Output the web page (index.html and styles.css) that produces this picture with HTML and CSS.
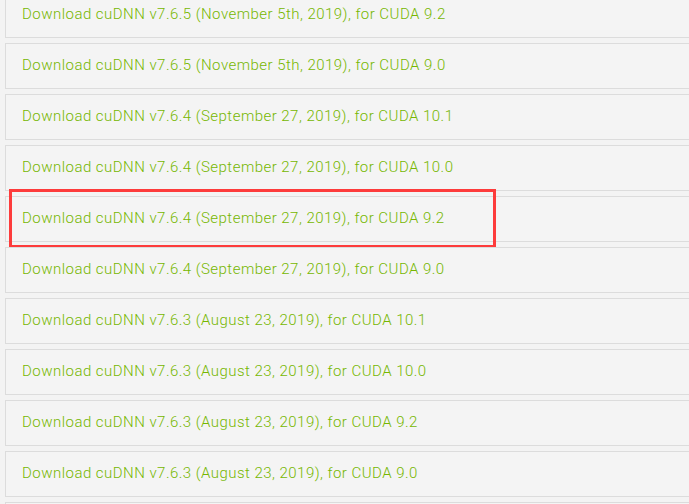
FILE: index.html
```html
<!DOCTYPE html>
<html>
<head>
<meta charset="utf-8">
<link rel="stylesheet" href="styles.css">
</head>
<body>
<div class="list">
  <div class="row"><a class="link">Download cuDNN v7.6.5 (November 5th, 2019), for CUDA 9.2</a></div>
  <div class="row"><a class="link">Download cuDNN v7.6.5 (November 5th, 2019), for CUDA 9.0</a></div>
  <div class="row"><a class="link">Download cuDNN v7.6.4 (September 27, 2019), for CUDA 10.1</a></div>
  <div class="row"><a class="link">Download cuDNN v7.6.4 (September 27, 2019), for CUDA 10.0</a></div>
  <div class="row highlighted"><a class="link">Download cuDNN v7.6.4 (September 27, 2019), for CUDA 9.2</a></div>
  <div class="row"><a class="link">Download cuDNN v7.6.4 (September 27, 2019), for CUDA 9.0</a></div>
  <div class="row"><a class="link">Download cuDNN v7.6.3 (August 23, 2019), for CUDA 10.1</a></div>
  <div class="row"><a class="link">Download cuDNN v7.6.3 (August 23, 2019), for CUDA 10.0</a></div>
  <div class="row"><a class="link">Download cuDNN v7.6.3 (August 23, 2019), for CUDA 9.2</a></div>
  <div class="row"><a class="link">Download cuDNN v7.6.3 (August 23, 2019), for CUDA 9.0</a></div>
  <div class="row"></div>
</div>
</body>
</html>
```
FILE: styles.css
```css
html, body {
  margin: 0;
  padding: 0;
  background: #f3f3f3;
  overflow: hidden;
}
body {
  font-family: Roboto, "Liberation Sans", sans-serif;
}
.list {
  display: flex;
  flex-direction: column;
  gap: 5px;
  margin-top: -8px;
  padding-left: 5px;
  width: 720px;
}
.row {
  position: relative;
  box-sizing: border-box;
  height: 46px;
  border: 1px solid #dcdcdc;
  background: #f4f4f4;
  padding-left: 16px;
  padding-bottom: 2px;
  display: flex;
  align-items: center;
}
.link {
  color: #76b700;
  font-size: 15px;
  font-weight: 300;
  letter-spacing: 0.47px;
  text-decoration: none;
}
.highlighted::after {
  content: "";
  position: absolute;
  top: -8px;
  left: 3px;
  width: 487px;
  height: 59px;
  box-sizing: border-box;
  border: 3px solid #fd3b3b;
}
```
